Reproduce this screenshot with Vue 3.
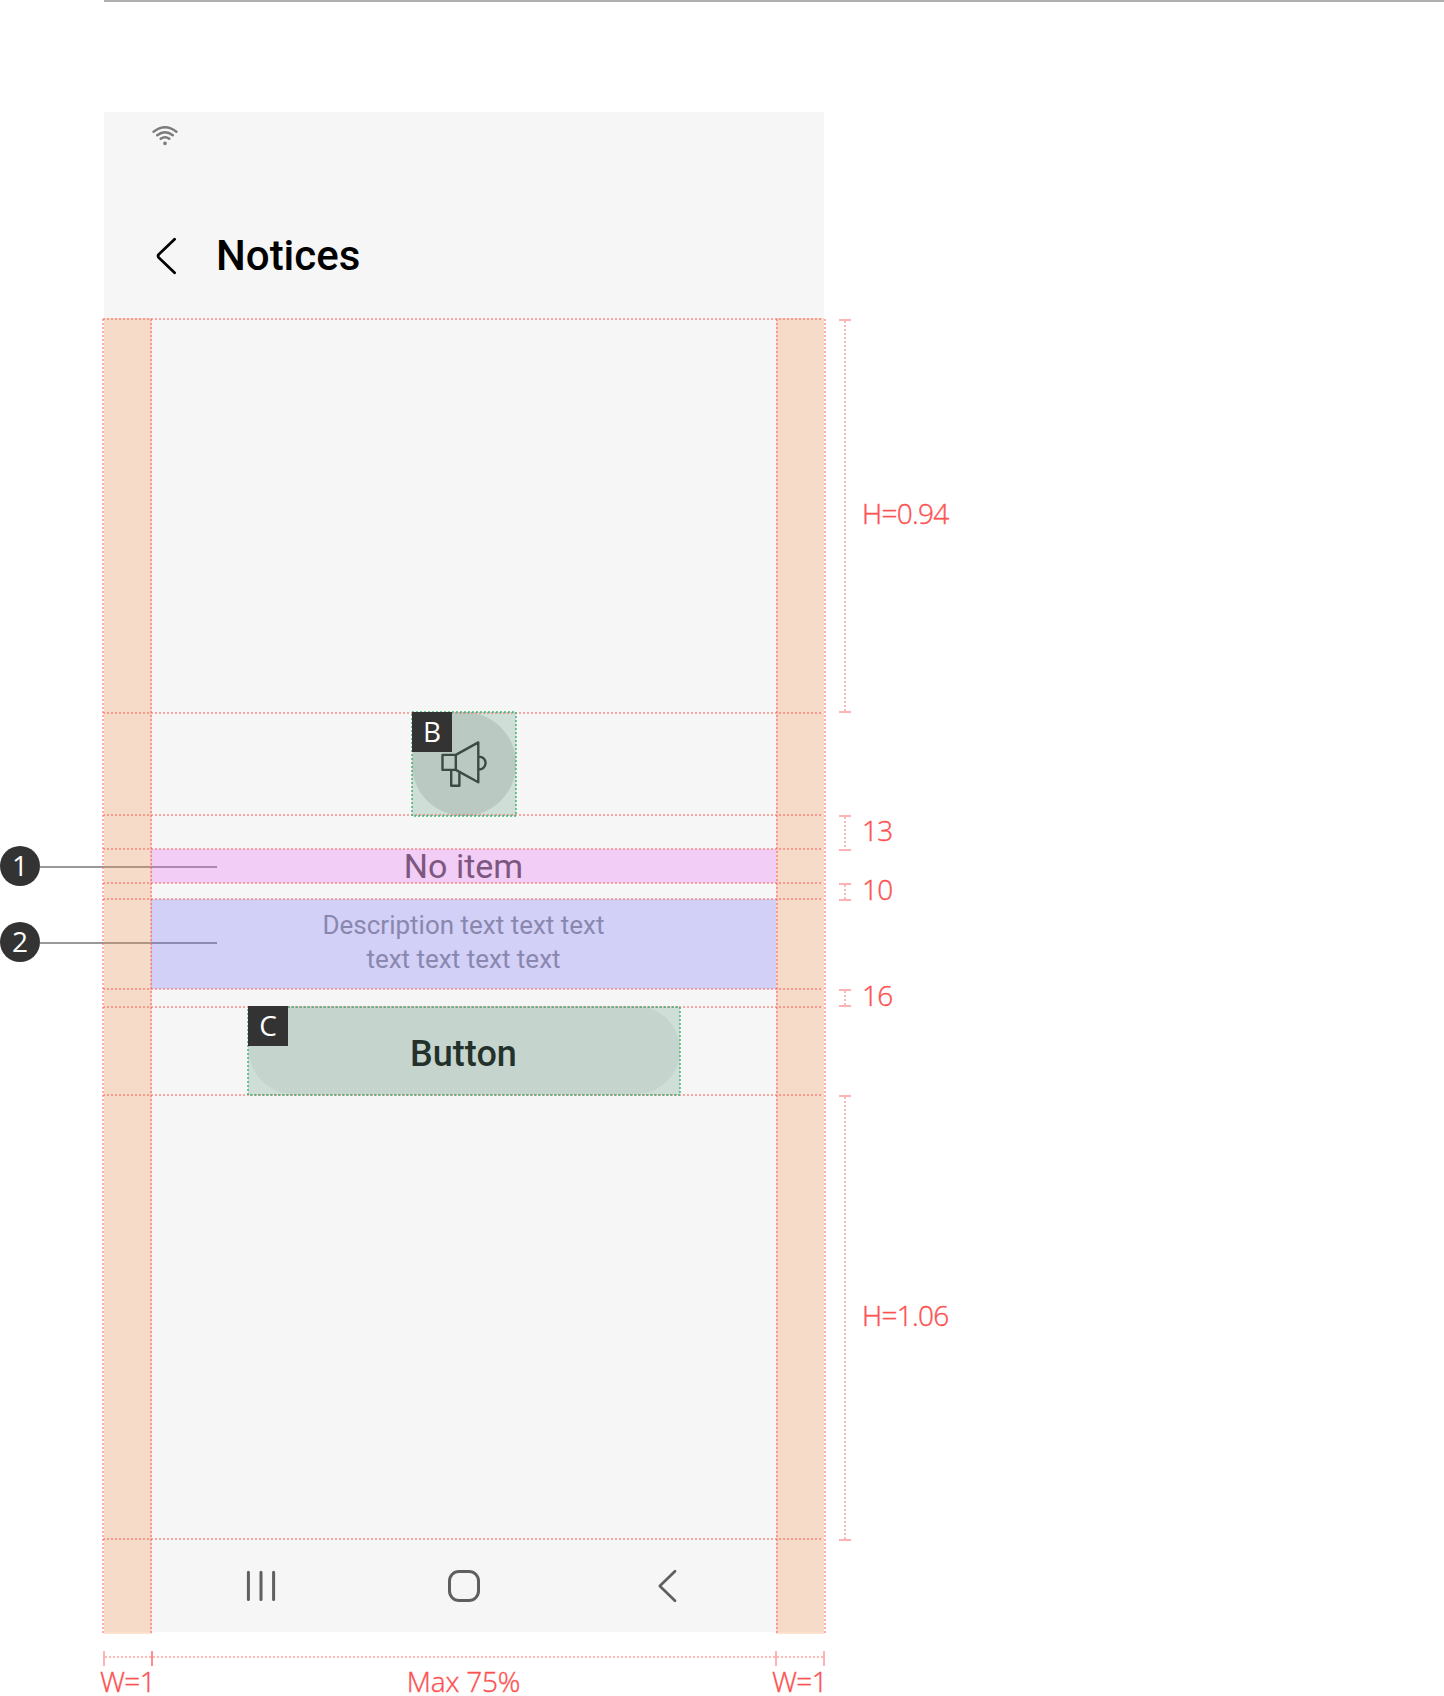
<script setup>
const guides = [318, 712, 814, 848, 882, 898, 988, 1006, 1094, 1538]
const rails = [102, 150, 776, 824]

const gaps = [
  { label: 'H=0.94', start: 319, end: 713 },
  { label: '13', start: 815, end: 851 },
  { label: '10', start: 883, end: 901 },
  { label: '16', start: 989, end: 1007 },
  { label: 'H=1.06', start: 1095, end: 1541 },
]

const callouts = [
  { n: 1, top: 846, line: 866 },
  { n: 2, top: 922, line: 942 },
]
</script>

<template>
  <div class="board">
    <div class="rule"></div>

    <main class="phone">
      <div class="status">
        <svg class="wifi" width="30" height="24" viewBox="150 122 30 24">
          <path d="M153.6 131.7Q165 122.9 176.4 131.7M157.2 135.3Q165 129 172.8 135.3M160.7 138.8Q165 135.6 169.3 138.8" />
          <circle cx="165" cy="143.4" r="1.8" />
        </svg>
      </div>
      <header class="title">
        <svg class="back" width="24" height="40" viewBox="155 236 24 40">
          <path d="M174.6 239.2 158.9 254.2q-1.7 1.8 0 3.6L174.6 272.8" />
        </svg>
        <h1>Notices</h1>
      </header>
      <section class="empty">
        <div class="icon">
          <svg width="52" height="52" viewBox="438 738 52 52">
            <path d="M442.5 754.9H455.8V769.9H442.5ZM455.8 754.9 478.3 742.4V782.2L455.8 769.9M451.2 770V785.8H459.4V772M479 756.6a6.6 6.4 0 0 1 0 12.8" />
          </svg>
        </div>
        <p class="headline">No item</p>
        <p class="description">Description text text text<br />text text text text</p>
        <button class="action">Button</button>
      </section>
      <nav class="nav">
        <svg width="32" height="36" viewBox="245 1568 32 36">
          <path d="M248.4 1572.3v27.2M261 1572.3v27.2M273.6 1572.3v27.2" />
        </svg>
        <svg width="36" height="36" viewBox="446 1568 36 36">
          <rect x="449.5" y="1571.5" width="29" height="29" rx="9.5" />
        </svg>
        <svg width="32" height="36" viewBox="651 1568 32 36">
          <path class="thin" d="M675 1571.2 659.8 1586 675 1600.8" />
        </svg>
      </nav>
    </main>

    <div v-for="c in callouts" :key="c.n">
      <i class="leader" :style="{ top: c.line + 'px' }"></i>
      <b class="number" :style="{ top: c.top + 'px' }">{{ c.n }}</b>
    </div>

    <div class="tint side left"></div>
    <div class="tint side right"></div>
    <div class="tint pink"></div>
    <div class="tint blue"></div>

    <i v-for="y in guides" :key="'g' + y" class="guide" :style="{ top: y + 'px' }"></i>
    <i v-for="x in rails" :key="'r' + x" class="rail" :style="{ left: x + 'px' }"></i>

    <div class="slot slot-b">
      <svg width="106" height="106"><rect x="1" y="1" width="104" height="104" /></svg>
      <span class="tag">B</span>
    </div>
    <div class="slot slot-c">
      <svg width="434" height="90"><rect x="1" y="1" width="432" height="88" /></svg>
      <span class="tag">C</span>
    </div>

    <div
      v-for="g in gaps"
      :key="g.label"
      class="gap"
      :style="{ top: g.start + 'px', height: g.end - g.start + 'px' }"
    >
      <span class="bar"></span>
      <span class="label">{{ g.label }}</span>
    </div>

    <footer class="widths">
      <div class="margin"><span class="label">W=1</span></div>
      <div class="middle"><span class="label">Max 75%</span></div>
      <div class="margin"><span class="label">W=1</span></div>
    </footer>
  </div>
</template>

<style>
body {
  margin: 0;
  background: #fff;
}
</style>

<style scoped>
.board {
  position: relative;
  box-sizing: border-box;
  width: 1444px;
  height: 1696px;
  padding-left: 104px;
  overflow: hidden;
  background: #fff;
  font-family: Roboto, sans-serif;
}
.rule {
  height: 2px;
  background: #b0b0b0;
}
.phone {
  display: flex;
  flex-direction: column;
  width: 720px;
  height: 1520px;
  margin-top: 110px;
  background: #f6f6f6;
}
.status {
  height: 74px;
  padding: 10px 0 0 46px;
}
svg {
  display: block;
  fill: none;
  stroke-linecap: round;
  stroke-linejoin: round;
}
.wifi path {
  stroke: #7b7b7b;
  stroke-width: 2.4;
}
.wifi circle {
  fill: #7b7b7b;
}
.title {
  display: flex;
  align-items: center;
  height: 120px;
  padding-left: 51px;
  gap: 37px;
}
.back path {
  stroke: #000;
  stroke-width: 2.7;
}
h1 {
  margin: 0;
  font-size: 42px;
  line-height: 50px;
  font-weight: 500;
}
.empty {
  display: flex;
  flex: 1;
  flex-direction: column;
  align-items: center;
  padding-top: 396px;
}
.icon {
  display: grid;
  place-items: center;
  width: 104px;
  height: 104px;
  border-radius: 50%;
  background: #dadada;
}
.icon path {
  stroke: #303230;
  stroke-width: 2.4;
}
p {
  margin: 0;
  text-align: center;
}
.headline {
  margin: 33px 1px 0 0;
  color: #595959;
  font-size: 34px;
  line-height: 34px;
}
.description {
  box-sizing: border-box;
  height: 90px;
  margin: 16px 1px 0 0;
  padding-top: 9px;
  color: #949494;
  font-size: 26px;
  line-height: 34px;
}
.action {
  width: 431px;
  height: 88px;
  margin-top: 17px;
  padding: 8px 1px 0 0;
  border: 0;
  border-radius: 44px;
  background: #e9e9e9;
  color: #0f0f0f;
  font: 500 36px/40px Roboto, sans-serif;
}
.nav {
  display: flex;
  align-items: center;
  justify-content: space-between;
  height: 92px;
  padding: 0 141px;
}
.nav path,
.nav rect {
  stroke: #5f5f5f;
  stroke-width: 3;
}
.nav .thin {
  stroke-width: 2.7;
}
.leader {
  position: absolute;
  left: 40px;
  width: 177px;
  height: 2px;
  background: #999;
}
.number,
.tag {
  position: absolute;
  left: 0;
  width: 40px;
  height: 40px;
  background: #333;
  color: #fff;
  text-align: center;
  font: 400 28px/38px "Open Sans", "Noto Sans", sans-serif;
}
.number {
  border-radius: 50%;
}
.tint {
  position: absolute;
}
.side {
  top: 318px;
  height: 1316px;
  background: rgba(246, 139, 66, 0.25);
}
.left {
  left: 104px;
  width: 48px;
}
.right {
  left: 776px;
  width: 48px;
}
.pink,
.blue {
  left: 151px;
  width: 625px;
}
.pink {
  top: 849px;
  height: 34px;
  background: rgba(230, 82, 242, 0.25);
}
.blue {
  top: 899px;
  height: 90px;
  background: rgba(102, 94, 250, 0.25);
}
.guide {
  position: absolute;
  left: 103px;
  width: 719px;
  height: 2px;
  background: repeating-linear-gradient(90deg, rgba(255, 90, 90, 0.52) 0 2px, transparent 2px 4px);
}
.rail {
  position: absolute;
  top: 319px;
  width: 2px;
  height: 1316px;
  background: repeating-linear-gradient(rgba(255, 90, 90, 0.52) 0 2px, transparent 2px 4px);
}
.slot {
  position: absolute;
  background: linear-gradient(rgba(94, 150, 126, 0.25), rgba(94, 150, 126, 0.25)) 1px 1px / calc(100% - 2px) calc(100% - 2px) no-repeat;
}
.slot rect {
  stroke: #2fb56f;
  stroke-opacity: 0.7;
  stroke-width: 2;
  stroke-linecap: butt;
  stroke-dasharray: 2 2;
}
.slot-b {
  left: 411px;
  top: 711px;
}
.slot-c {
  left: 247px;
  top: 1006px;
}
.tag {
  left: 1px;
  top: 1px;
}
.slot-c .tag {
  top: 0;
}
.gap {
  position: absolute;
  left: 839px;
  display: flex;
  align-items: center;
}
.bar {
  box-sizing: border-box;
  width: 12px;
  height: 100%;
  border: solid #fdb3b3;
  border-width: 2px 0;
  background: repeating-linear-gradient(#fdb9b9 0 2px, transparent 2px 4px) 5px 0 / 2px 100% no-repeat;
}
.label {
  color: #fc5252;
  font: 300 28px/38px "Open Sans", "Noto Sans", sans-serif;
  letter-spacing: -0.7px;
  -webkit-text-stroke: 0.4px #fc5252;
  white-space: nowrap;
}
.gap .label {
  margin: -6px 0 0 11px;
}
.widths {
  display: flex;
  margin: 19px 0 0 -1px;
  width: 722px;
}
.widths div {
  display: flex;
  justify-content: center;
  box-sizing: border-box;
  height: 12px;
  padding-top: 15px;
  background: repeating-linear-gradient(90deg, #fdb9b9 0 2px, transparent 2px 4px) 0 5px / 100% 2px no-repeat;
}
.widths .label {
  margin-right: 1px;
  line-height: 30px;
}
.widths .middle .label {
  letter-spacing: -0.2px;
}
.margin {
  width: 50px;
  border: solid #fdb3b3;
  border-width: 0 2px;
}
.middle {
  width: 626px;
  margin: 0 -2px;
  border: solid #fd8d8d;
  border-width: 0 2px;
}
</style>
